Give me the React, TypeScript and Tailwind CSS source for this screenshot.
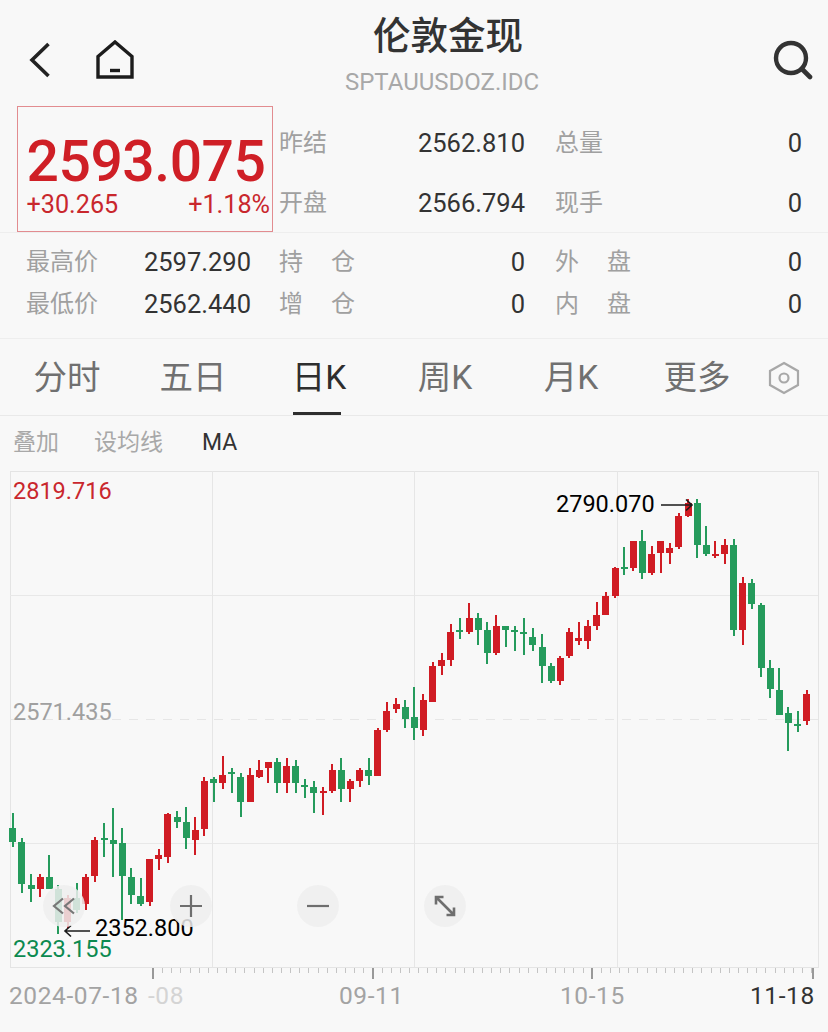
const GREEN = "#259b5c";
const RED = "#d01c24";

// each candle: body top, body bottom, wick top, wick bottom, 1 = red
const candles: [number, number, number, number, number][] = [
  [828, 842, 813, 847, 0], [842, 884, 838, 893, 0], [885, 889, 874, 902, 0], [877, 889, 874, 897, 1],
  [877, 889, 855, 889, 0], [889, 922, 885, 934, 0], [898, 922, 895, 928, 1], [898, 910, 883, 913, 0],
  [877, 904, 874, 910, 1], [840, 876, 837, 882, 1], [838, 840, 823, 857, 0], [840, 844, 808, 877, 0],
  [843, 876, 828, 920, 0], [877, 895, 868, 904, 0], [896, 904, 878, 906, 0], [859, 902, 859, 906, 1],
  [855, 859, 849, 870, 1], [814, 857, 813, 863, 1], [817, 822, 811, 828, 0], [822, 838, 807, 849, 0],
  [830, 840, 817, 855, 1], [781, 829, 777, 836, 1], [779, 783, 777, 802, 0], [775, 783, 756, 789, 1],
  [772, 773, 768, 793, 0], [777, 802, 773, 817, 0], [775, 802, 768, 802, 1], [770, 777, 760, 778, 1],
  [762, 768, 762, 783, 1], [762, 783, 758, 793, 0], [766, 783, 758, 793, 1], [766, 783, 760, 793, 0],
  [785, 787, 779, 798, 0], [787, 793, 781, 813, 0], [791, 793, 787, 815, 1], [770, 791, 764, 793, 1],
  [770, 789, 758, 802, 0], [781, 789, 779, 802, 1], [770, 781, 768, 787, 1], [770, 776, 758, 785, 0],
  [730, 776, 728, 776, 1], [711, 730, 702, 732, 1], [704, 709, 698, 713, 1], [707, 719, 700, 728, 0],
  [717, 728, 687, 740, 0], [700, 730, 694, 736, 1], [666, 702, 662, 702, 1], [660, 666, 653, 675, 1],
  [632, 660, 624, 666, 1], [630, 632, 618, 639, 0], [618, 632, 603, 634, 1], [618, 630, 613, 645, 0],
  [630, 653, 622, 664, 0], [626, 653, 615, 655, 1], [626, 630, 626, 647, 0], [630, 632, 626, 651, 0],
  [632, 634, 618, 655, 0], [637, 645, 628, 651, 0], [647, 666, 634, 683, 0], [666, 681, 663, 683, 0],
  [658, 681, 656, 685, 1], [632, 656, 628, 658, 1], [638, 641, 622, 645, 1], [626, 641, 620, 649, 1],
  [615, 626, 602, 630, 1], [596, 615, 592, 615, 1], [568, 596, 567, 598, 1], [567, 568, 547, 575, 0],
  [541, 568, 541, 571, 1], [541, 573, 530, 579, 0], [554, 573, 546, 575, 1], [541, 553, 541, 573, 1],
  [548, 553, 543, 564, 1], [516, 547, 513, 549, 1], [503, 516, 499, 517, 1], [503, 545, 499, 558, 0],
  [545, 554, 526, 556, 0], [554, 556, 541, 558, 1], [545, 554, 539, 564, 1], [545, 630, 539, 636, 0],
  [583, 630, 577, 645, 1], [583, 604, 579, 609, 0], [605, 668, 603, 677, 0], [668, 689, 660, 698, 0],
  [690, 715, 668, 715, 0], [713, 723, 707, 751, 0], [724, 725, 711, 732, 0], [694, 721, 690, 725, 1],
];

const ticks = Array.from({ length: 73 }, (_, i) => 153 + i * 9.14);

function Stat({ label, value, spread, width }: { label: string; value: string; spread?: boolean; width: string }) {
  return (
    <div className={`flex items-center justify-between ${width}`}>
      {spread ? (
        <span className="flex w-[76px] justify-between text-[24px] text-[#a0a0a0]">
          <span>{label[0]}</span>
          <span>{label[1]}</span>
        </span>
      ) : (
        <span className="text-[24px] text-[#a0a0a0]">{label}</span>
      )}
      <span className="text-[25.5px] text-[#333333]">{value}</span>
    </div>
  );
}

function RoundButton({ children, className }: { children: React.ReactNode; className: string }) {
  return (
    <div className={`absolute top-[414px] flex h-[42px] w-[42px] items-center justify-center rounded-full bg-[#eeeeee]/85 ${className}`}>
      {children}
    </div>
  );
}

export default function App() {
  return (
    <div className="h-[1032px] w-[828px] overflow-hidden bg-[#f8f8f8] [font-family:Roboto,'Noto_Sans_CJK_SC',sans-serif]">
      {/* title bar */}
      <header className="flex h-[106px] items-start justify-between">
        <div className="flex items-center pt-[40px]">
          <svg className="ml-[28px] h-[40px] w-[24px]" viewBox="0 0 24 40" fill="none">
            <path d="M20.5 4L4 20L20.5 36" stroke="#222222" strokeWidth="3.6" />
          </svg>
          <svg className="ml-[43px] h-[40px] w-[40px]" viewBox="0 0 40 40" fill="none">
            <path d="M3 37V16.5L20 2L37 16.5V37Z" stroke="#1c1c1c" strokeWidth="3.4" strokeLinejoin="miter" />
            <path d="M15 30.5H25" stroke="#1c1c1c" strokeWidth="3.4" />
          </svg>
        </div>
        <div className="mr-[22px] flex flex-col items-center">
          <h1 className="pl-[12px] pt-[10px] text-[37.5px] font-medium leading-[52px] text-[#333333]">伦敦金现</h1>
          <p className="mt-[5px] text-[24px] leading-[30px] text-[#a8a8a8]">SPTAUUSDOZ.IDC</p>
        </div>
        <svg className="mr-[15px] mt-[40px] h-[40px] w-[42px]" viewBox="0 0 42 40" fill="none">
          <circle cx="20" cy="18" r="15" stroke="#333333" strokeWidth="4.4" />
          <path d="M31 29L39 37" stroke="#333333" strokeWidth="4.6" strokeLinecap="round" />
        </svg>
      </header>

      {/* price block */}
      <section className="flex h-[127px] border-b border-[#eeeeee]">
        <div className="ml-[17px] flex h-[126px] w-[256px] flex-col border-[1.5px] border-[#e28c90] pl-[8.5px] pr-[2px]">
          <div className="mt-[27px] text-[57px] font-medium leading-[56px] tracking-[-0.45px] text-[#cf1f26]">2593.075</div>
          <div className="mt-[1px] flex justify-between text-[25.2px] leading-[28px] text-[#c9272d]">
            <span>+30.265</span>
            <span>+1.18%</span>
          </div>
        </div>
        <div className="ml-[6px] flex flex-col">
          <div className="mt-[15px] flex h-[44px] gap-[30px]">
            <Stat label="昨结" value="2562.810" width="w-[246px]" />
            <Stat label="总量" value="0" width="w-[247px]" />
          </div>
          <div className="mt-[16px] flex h-[44px] gap-[30px]">
            <Stat label="开盘" value="2566.794" width="w-[246px]" />
            <Stat label="现手" value="0" width="w-[247px]" />
          </div>
        </div>
      </section>

      <section className="h-[106px] border-b border-[#eeeeee] pt-[8px]">
        <div className="flex h-[42px] pl-[26px]">
          <Stat label="最高价" value="2597.290" width="w-[225px]" />
          <Stat label="持仓" value="0" spread width="ml-[28px] w-[246px]" />
          <Stat label="外盘" value="0" spread width="ml-[30px] w-[247px]" />
        </div>
        <div className="flex h-[42px] pl-[26px]">
          <Stat label="最低价" value="2562.440" width="w-[225px]" />
          <Stat label="增仓" value="0" spread width="ml-[28px] w-[246px]" />
          <Stat label="内盘" value="0" spread width="ml-[30px] w-[247px]" />
        </div>
      </section>

      {/* period tabs */}
      <nav className="flex h-[77px] items-center border-b border-[#e9e9e9] pl-[4px] pt-[2px] text-[33.5px] text-[#707070]">
        <span className="w-[126px] text-center">分时</span>
        <span className="w-[126px] text-center">五日</span>
        <span className="relative flex h-full w-[126px] items-center justify-center text-[#2e2e2e]">
          日K
          <span className="absolute bottom-[0px] left-[37px] h-[3px] w-[48px] bg-[#2e2e2e]" />
        </span>
        <span className="w-[126px] text-center">周K</span>
        <span className="w-[126px] text-center">月K</span>
        <span className="w-[126px] text-center">更多</span>
        <svg className="ml-[8px] h-[34px] w-[32px]" viewBox="0 0 32 34" fill="none">
          <path d="M16 2L30 10V24L16 32L2 24V10Z" stroke="#a8a8a8" strokeWidth="2.2" />
          <circle cx="16" cy="17" r="4.5" stroke="#a8a8a8" strokeWidth="2.2" />
        </svg>
      </nav>

      <div className="flex h-[55px] items-center pl-[13px] text-[23px] text-[#a8a8a8]">
        <span>叠加</span>
        <span className="ml-[35px]">设均线</span>
        <span className="ml-[39px] text-[#333333]">MA</span>
      </div>

      {/* k-line chart */}
      <div className="relative h-[510px]">
        <svg className="block" width="828" height="510" viewBox="0 471 828 510" shapeRendering="crispEdges">
          <rect x="10.5" y="471.5" width="808" height="496" fill="none" stroke="#e4e4e4" />
          <path d="M10 595.5H818M10 843.5H818" stroke="#e8e8e8" strokeWidth="1.5" />
          <path d="M212 471V967M414 471V967M617 471V967" stroke="#e6e6e6" strokeWidth="1" />
          <path d="M10 719.5H818" stroke="#e6e6e6" strokeWidth="1.5" strokeDasharray="9 8" />
          {ticks.map((x) => (
            <path key={x} d={`M${Math.round(x)}.5 968V973`} stroke="#c4c4c4" />
          ))}
          <path d="M153 968V979M373 968V979M592 968V979M813 968V979" stroke="#999999" strokeWidth="2" />
          {candles.map(([top, bottom, wickTop, wickBottom, up], i) => {
            const x = 12.8 + i * 9.125;
            const color = up ? RED : GREEN;
            return (
              <g key={i} fill={color}>
                <rect x={x - 1} y={wickTop} width="2" height={wickBottom - wickTop} />
                <rect x={x - 3.5} y={top} width="7" height={Math.max(bottom - top, 2)} />
              </g>
            );
          })}
        </svg>

        <span className="absolute left-[13px] top-[5px] text-[23.5px] leading-[30px] text-[#c9272d]">2819.716</span>
        <span className="absolute left-[13px] top-[226px] text-[23.5px] leading-[30px] text-[#a0a0a0]">2571.435</span>
        <span className="absolute left-[13px] top-[463px] text-[23.5px] leading-[30px] text-[#0c8a50]">2323.155</span>
        <span className="absolute left-[556px] top-[18px] text-[23.5px] leading-[30px] text-black">2790.070</span>
        <span className="absolute left-[95px] top-[442px] text-[23.5px] leading-[30px] text-black">2352.800</span>
        <svg className="absolute left-[660px] top-[27px]" width="34" height="14" viewBox="0 0 34 14" fill="none">
          <path d="M1 7H32M26 1.5L32 7L26 12.5" stroke="#1a1a1a" strokeWidth="1.6" />
        </svg>
        <svg className="absolute left-[63px] top-[453px]" width="28" height="14" viewBox="0 0 28 14" fill="none">
          <path d="M27 7H2M8 1.5L2 7L8 12.5" stroke="#1a1a1a" strokeWidth="1.6" />
        </svg>

        <RoundButton className="left-[43px]">
          <svg width="26" height="26" viewBox="0 0 26 26" fill="none" stroke="#777777" strokeWidth="2.2">
            <path d="M12 5.5L3 13L12 20.5M23 5.5L14 13L23 20.5" />
          </svg>
        </RoundButton>
        <RoundButton className="left-[170px]">
          <svg width="24" height="24" viewBox="0 0 24 24" fill="none" stroke="#6e6e6e" strokeWidth="2.2">
            <path d="M12 1V23M1 12H23" />
          </svg>
        </RoundButton>
        <RoundButton className="left-[297px]">
          <svg width="24" height="24" viewBox="0 0 24 24" fill="none" stroke="#6e6e6e" strokeWidth="2.2">
            <path d="M1 12H23" />
          </svg>
        </RoundButton>
        <RoundButton className="left-[424px]">
          <svg width="24" height="24" viewBox="0 0 24 24" fill="none" stroke="#6e6e6e" strokeWidth="2.6">
            <path d="M3.5 3.5L20.5 20.5M3 10.5V3H10.5M21 13.5V21H13.5" />
          </svg>
        </RoundButton>
      </div>

      {/* date axis */}
      <div className="flex h-[30px] items-center pl-[9px] text-[24.5px] tracking-[0.6px] text-[#a3a3a3]">
        <span className="w-[139px]">2024-07-18</span>
        <span className="w-[191px] text-[#d4d4d4]">-08</span>
        <span className="w-[221px]">09-11</span>
        <span className="w-[190px]">10-15</span>
        <span className="text-[#333333]">11-18</span>
      </div>
    </div>
  );
}
